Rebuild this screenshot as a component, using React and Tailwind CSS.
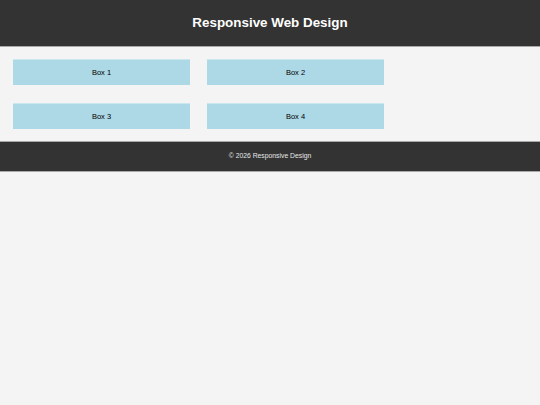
export default function App() {
  const boxes = ["Box 1", "Box 2", "Box 3", "Box 4"];
  return (
    <div className="min-h-[405px] bg-[#f4f4f4]" style={{ fontFamily: '"Liberation Sans", Arial, sans-serif' }}>
      <header className="h-[47px] bg-[#333333] border-b border-[#a9a9a9] flex items-center justify-center">
        <h1 className="text-white font-bold text-[13.4px] leading-none">Responsive Web Design</h1>
      </header>
      <main className="px-[13px] py-[12px] grid grid-cols-[177px_177px] gap-x-[17px] gap-y-[18px]">
        {boxes.map((b) => (
          <div key={b} className="h-[26px] bg-[#add8e6] border-t border-[#cbe7f0] flex items-center justify-center text-[7.5px] text-black">
            {b}
          </div>
        ))}
      </main>
      <footer className="h-[31px] bg-[#333333] border-y border-[#a9a9a9] flex items-center justify-center text-[6.8px] text-[#e6e6e6]">
        © 2026 Responsive Design
      </footer>
    </div>
  );
}
